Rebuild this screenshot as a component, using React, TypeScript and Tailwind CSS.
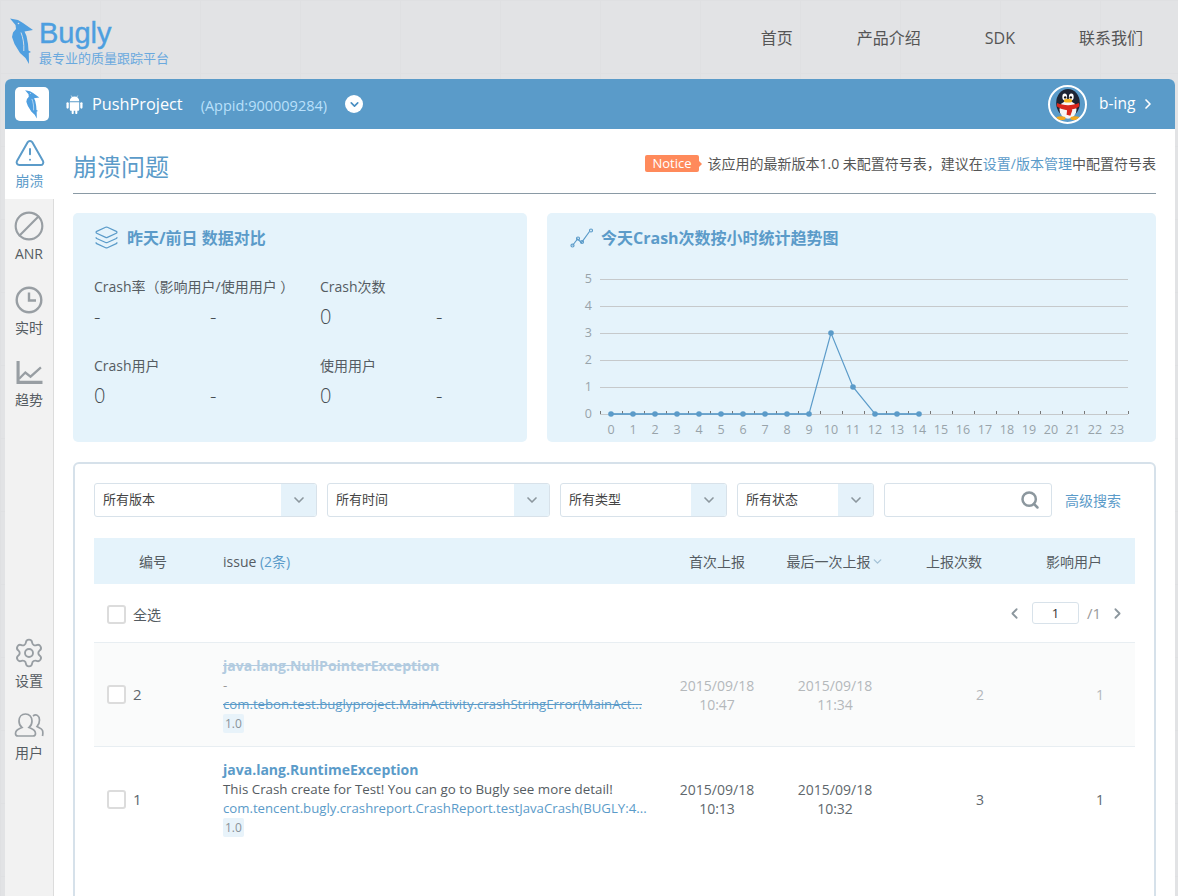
import { ChevronDown, ChevronLeft, ChevronRight, Search, Layers, Settings, AlertTriangle, Ban } from "lucide-react";

const font = "font-['Open_Sans','Noto_Sans_CJK_SC',sans-serif]";

function Bird({ className, cut }: { className?: string; cut: string }) {
  return (
    <svg viewBox="10 19 24 47" className={className}>
      <path fill="#4f9fe0" d="M10 19.500L18 21 23 24 33 31 24.500 32.500 26.500 37 28 45 28.500 51.500 31 53 28.800 54 29 65 25.500 59 20 54 14.500 45 12 38 13 33.500 16 30 15.500 26z" />
      <path fill="none" stroke={cut} strokeWidth="0.900" d="M21 33.500c2 5 3.200 11 2.800 18.500" />
      <circle cx="18.500" cy="24.500" r="0.800" fill={cut} />
    </svg>
  );
}

function Penguin() {
  return (
    <svg viewBox="0 0 36 36" className="w-[34px] h-[34px]">
      <ellipse cx="18" cy="17" rx="12.500" ry="15" fill="#1d2433" />
      <ellipse cx="18" cy="24" rx="9" ry="9.500" fill="#f7f7f7" />
      <ellipse cx="14.500" cy="10.500" rx="2.500" ry="3.500" fill="#fff" />
      <ellipse cx="21.500" cy="10.500" rx="2.500" ry="3.500" fill="#fff" />
      <circle cx="15" cy="11" r="1.300" fill="#111" />
      <circle cx="21" cy="11" r="1.300" fill="#111" />
      <ellipse cx="18" cy="14.500" rx="4.500" ry="2" fill="#f5b21c" />
      <path fill="#d9261c" d="M6.500 17c7 3 16 3 23 0l.5 3.500c-2.500 2-5 3-8 3.200l.5 1.300-2 5.500-4-1 .500-5C12 24 8.500 22.500 6 20.500z" />
      <ellipse cx="10.500" cy="33" rx="5" ry="2" fill="#f5a81c" />
      <ellipse cx="25.500" cy="33" rx="5" ry="2" fill="#f5a81c" />
    </svg>
  );
}

function Android() {
  return (
    <svg viewBox="0 0 18 20" className="w-[17px] h-[19px]" fill="#fff">
      <path d="M4 6.500a5 5 0 0 1 10 0z" />
      <path d="M4 7.500h10v8a1 1 0 0 1-1 1h-1v2.500a1.100 1.100 0 0 1-2.200 0v-2.500H8.200v2.500a1.100 1.100 0 0 1-2.200 0v-2.500H5a1 1 0 0 1-1-1z" />
      <rect x="0.500" y="7.500" width="2.400" height="7" rx="1.200" />
      <rect x="15.100" y="7.500" width="2.400" height="7" rx="1.200" />
      <path d="M5.500 0.500l1.500 2.500M12.500 0.500l-1.500 2.500" stroke="#fff" strokeWidth="0.700" />
    </svg>
  );
}

function Trend() {
  return (
    <svg viewBox="0 0 26 24" className="w-[27px] h-[25px]" fill="none" stroke="#989ea3">
      <path d="M2 1v20.500h23.500" strokeWidth="3" />
      <path d="M3 18l6-6 5 4 10-9" strokeWidth="2.200" />
    </svg>
  );
}

function ClockIcon() {
  return (
    <svg viewBox="0 0 28 28" className="w-[28px] h-[28px]" fill="none" stroke="#989ea3" strokeWidth="2.400">
      <circle cx="14" cy="14" r="12.300" />
      <path d="M14 6.500V14.500H21" />
    </svg>
  );
}

function UsersIcon() {
  return (
    <svg viewBox="0 0 30 26" className="w-[30px] h-[26px]" fill="none" stroke="#989ea3" strokeWidth="1.700">
      <path d="M19 4c3-2.500 6.500-.5 6.500 4 0 3-1 5-2.500 6.500 2 1.500 4.500 1.500 5.500 4 .5 1.500.5 3 0 5.500" />
      <path d="M11.500 2c-4 0-6.500 3-6.500 7 0 2.500 1 5 3 6.500-3 1.500-6.500 2-6.500 6 0 1.500 1 2.500 2.500 2.500h15c1.500 0 2.500-1 2.500-2.500 0-4-3.500-4.500-6.500-6 2-1.500 3-4 3-6.500 0-4-2.500-7-6.500-7z" />
    </svg>
  );
}

function SideItem({ label, children, h, active }: { label: string; children: React.ReactNode; h: string; active?: boolean }) {
  return (
    <div className={`flex flex-col items-center ${h} ${active ? "bg-white w-[49px] text-[#5b9bc9]" : "text-[#555c62]"}`}>
      <div className="h-[30px] flex items-center justify-center">{children}</div>
      <span className="text-[14px] leading-[20px] mt-[3px]">{label}</span>
    </div>
  );
}

function Stat({ label, a, b }: { label: string; a: string; b: string }) {
  return (
    <div className="w-[226px] shrink-0">
      <div className="text-[14px] leading-[20px] text-[#555c62] whitespace-nowrap">{label}</div>
      <div className="flex text-[20px] leading-[28px] font-light text-[#454c52] mt-[6px]">
        <span className="w-[116px]">{a}</span>
        <span>{b}</span>
      </div>
    </div>
  );
}

function Chart() {
  const ys = [144, 117, 90, 63, 36, 9];
  const hours = Array.from({ length: 24 }, (_, i) => i);
  const data = [0, 0, 0, 0, 0, 0, 0, 0, 0, 0, 3, 1, 0, 0, 0];
  const points = data.map((v, i) => [64 + i * 22, 144 - v * 27]);
  return (
    <svg width="609" height="172" className="block" fontSize="12.500" fill="#98a3aa">
      {ys.map((y, i) => (
        <g key={y}>
          <line x1="53" x2="581" y1={y + 0.5} y2={y + 0.5} stroke="#c6c9cb" />
          <text x="45" y={y + 4} textAnchor="end">{i}</text>
        </g>
      ))}
      {Array.from({ length: 25 }, (_, i) => (
        <line key={i} x1={53.5 + i * 22} x2={53.5 + i * 22} y1="141" y2="144" stroke="#777" />
      ))}
      {hours.map((h) => (
        <text key={h} x={64 + h * 22} y="164" textAnchor="middle">{h}</text>
      ))}
      <polyline points={points.map((p) => p.join(",")).join(" ")} fill="none" stroke="#5b9bc9" strokeWidth="1.200" />
      <line x1="64" x2="262" y1="144" y2="144" stroke="#5b9bc9" strokeWidth="2" opacity="0.7" />
      <line x1="328" x2="372" y1="144" y2="144" stroke="#5b9bc9" strokeWidth="2" opacity="0.7" />
      {points.map((p) => (
        <circle key={p[0]} cx={p[0]} cy={p[1]} r="2.800" fill="#5b9bc9" />
      ))}
    </svg>
  );
}

function Select({ label, w }: { label: string; w: string }) {
  return (
    <div className={`${w} h-[34px] border border-[#d8e2ea] rounded-[3px] flex items-center overflow-hidden bg-white`}>
      <span className="flex-1 pl-2 text-[13px] text-[#444]">{label}</span>
      <span className="w-[35px] h-full bg-[#e5f2fa] flex items-center justify-center">
        <ChevronDown size={16} strokeWidth={2.500} className="text-[#8c979e]" />
      </span>
    </div>
  );
}

function Checkbox() {
  return <span className="w-[19px] h-[19px] border-2 border-[#dcdcdc] rounded-[3px] bg-white shrink-0" />;
}

function Row(props: {
  id: string;
  name: string;
  msg: string;
  stack: string;
  first: string;
  firstTime: string;
  last: string;
  lastTime: string;
  count: string;
  users: string;
  dim?: boolean;
}) {
  const { dim } = props;
  const cell = dim ? "text-[#b4b8bb]" : "text-[#60676d]";
  return (
    <div className={`flex items-center h-[104px] ${dim ? "bg-[#fafbfb] border-b border-[#e8eef2]" : "bg-white"}`}>
      <div className="w-[129px] pl-[13px] flex items-center gap-[7px] text-[15px] text-[#60676d]">
        <Checkbox />
        {props.id}
      </div>
      <div className="w-[435px] min-w-0 -mt-[1px]">
        <div className={`text-[14px] leading-[20px] font-bold whitespace-nowrap ${dim ? "text-[#b2cbe0] line-through" : "text-[#5b9bc9]"}`}>{props.name}</div>
        <div className={`text-[13.350px] leading-[19px] whitespace-nowrap ${dim ? "text-[#999]" : "text-[#555c62]"}`}>{props.msg}</div>
        <div className={`text-[13.200px] leading-[19px] whitespace-nowrap text-[#5b9bc9] ${dim ? "line-through" : ""}`}>{props.stack}</div>
        <div className="w-fit px-[2px] h-[19px] leading-[19px] text-[12px] rounded-[2px] bg-[#e8f3fa] text-[#8a9299]">1.0</div>
      </div>
      <div className={`w-[118px] text-center text-[14px] leading-[19px] ${cell}`}>
        {props.first}
        <br />
        {props.firstTime}
      </div>
      <div className={`w-[118px] text-center text-[14px] leading-[19px] ${cell}`}>
        {props.last}
        <br />
        {props.lastTime}
      </div>
      <div className={`w-[142px] text-center text-[14px] pl-[30px] ${cell}`}>{props.count}</div>
      <div className={`w-[99px] text-center text-[14px] pl-[29px] ${cell}`}>{props.users}</div>
    </div>
  );
}

export default function App() {
  return (
    <div className={`${font} h-[896px] overflow-hidden bg-[#e2e3e5] bg-[linear-gradient(#dfe0e2_1px,transparent_1px),linear-gradient(90deg,#dfe0e2_1px,transparent_1px)] bg-[size:100px_73px]`}>
      <header className="h-[79px] flex items-center justify-between pl-[10px] pr-[35px]">
        <div className="flex items-start mt-[3px]">
          <Bird className="w-[24px] h-[47px] mt-[2px]" cut="#e2e3e5" />
          <div className="ml-[5px]">
            <div className="text-[29px] leading-[30px] text-[#4d9fe0] [-webkit-text-stroke:0.4px_#4d9fe0] font-['Liberation_Sans',sans-serif] mt-[2px]">Bugly</div>
            <div className="text-[13px] leading-[18px] text-[#6aa9de] mt-[1px]">最专业的质量跟踪平台</div>
          </div>
        </div>
        <nav className="flex gap-[64px] text-[16px] text-[#555] -mt-[4px]">
          <span>首页</span>
          <span>产品介绍</span>
          <span>SDK</span>
          <span>联系我们</span>
        </nav>
      </header>

      <div className="ml-[5px] w-[1170px] h-[817px] rounded-t-[6px] overflow-hidden bg-white">
        <div className="h-[50px] bg-[#5a9bc9] flex items-center pl-[10px] pr-[19px] text-white">
          <span className="w-[34px] h-[34px] rounded-[5px] bg-white flex items-center justify-center">
            <Bird className="w-[15px] h-[29px]" cut="#fff" />
          </span>
          <span className="ml-[17px]"><Android /></span>
          <span className="ml-[9px] text-[16.300px]">PushProject</span>
          <span className="ml-[18px] mt-[3px] text-[14.500px] text-[#b9e0fb]">(Appid:900009284)</span>
          <span className="ml-[18px] w-[18px] h-[18px] rounded-full bg-white flex items-center justify-center">
            <ChevronDown size={13} strokeWidth={3} className="text-[#4a8fc2]" />
          </span>
          <span className="ml-auto w-[39px] h-[39px] rounded-full border-2 border-white bg-[#5a9bc9] flex items-center justify-center overflow-hidden">
            <Penguin />
          </span>
          <span className="ml-[12px] w-[37px] text-[15.500px]">b-ing</span>
          <ChevronRight size={16} strokeWidth={2.500} className="ml-[4px]" />
        </div>

        <div className="flex h-[767px]">
          <aside className="w-[49px] shrink-0 bg-[#f2f2f2] border-r border-[#dcdcdc] flex flex-col">
            <SideItem label="崩溃" h="h-[70px] pt-[9px]" active>
              <AlertTriangle size={32} strokeWidth={1.500} className="text-[#5b9bc9]" />
            </SideItem>
            <SideItem label="ANR" h="h-[72px] pt-[12px]">
              <Ban size={32} strokeWidth={1.600} className="text-[#989ea3] -scale-x-100" />
            </SideItem>
            <SideItem label="实时" h="h-[72px] pt-[14px]">
              <ClockIcon />
            </SideItem>
            <SideItem label="趋势" h="h-[70px] pt-[14px]">
              <Trend />
            </SideItem>
            <div className="mt-[225px]">
              <SideItem label="设置" h="h-[72px]">
                <Settings size={32} strokeWidth={1.400} className="text-[#989ea3]" />
              </SideItem>
              <SideItem label="用户" h="h-[70px]">
                <UsersIcon />
              </SideItem>
            </div>
          </aside>

          <main className="flex-1 pl-[19px] pr-[19px] min-w-0">
            <div className="h-[65px] border-b border-[#8a9aa5] flex items-center justify-between">
              <h1 className="text-[24px] text-[#5b9bc9] mt-[12px]">崩溃问题</h1>
              <div className="flex items-center text-[14px] text-[#555] mt-[4px]">
                <span className="relative h-[17px] leading-[17px] text-[13px] px-[7px] bg-[#ff8a5b] text-white rounded-[2px] mr-[9px]">
                  Notice
                  <span className="absolute -right-[3px] top-[5px] border-l-[4px] border-y-[4px] border-y-transparent border-l-[#ff8a5b]" />
                </span>
                该应用的最新版本1.0 未配置符号表，建议在<span className="text-[#5b9bc9]">设置/版本管理</span>中配置符号表
              </div>
            </div>

            <div className="flex gap-[20px] mt-[19px]">
              <section className="w-[454px] h-[229px] bg-[#e5f3fb] rounded-[5px] pl-[21px] pt-[12px]">
                <div className="flex items-center h-[25px] text-[16px] font-bold text-[#5b9bc9]">
                  <Layers size={25} strokeWidth={1.200} />
                  <span className="ml-[8px]">昨天/前日 数据对比</span>
                </div>
                <div className="flex mt-[27px]">
                  <Stat label="Crash率（影响用户/使用用户 ）" a="-" b="-" />
                  <Stat label="Crash次数" a="0" b="-" />
                </div>
                <div className="flex mt-[25px]">
                  <Stat label="Crash用户" a="0" b="-" />
                  <Stat label="使用用户" a="0" b="-" />
                </div>
              </section>
              <section className="w-[609px] h-[229px] bg-[#e5f3fb] rounded-[5px] pt-[12px]">
                <div className="flex items-center h-[25px] pl-[23px] text-[16px] font-bold text-[#5b9bc9]">
                  <svg viewBox="0 0 24 20" className="w-[24px] h-[20px]" fill="none" stroke="#5b9bc9" strokeWidth="1.200">
                    <path d="M2.500 17.500l5-6.500 4 3.500 8-11" />
                    <circle cx="2.500" cy="17.500" r="1.500" />
                    <circle cx="8" cy="10.500" r="1.500" />
                    <circle cx="12" cy="14" r="1.500" />
                    <circle cx="21" cy="2.500" r="1.500" />
                  </svg>
                  <span className="ml-[7px]">今天Crash次数按小时统计趋势图</span>
                </div>
                <div className="mt-[20px]">
                  <Chart />
                </div>
              </section>
            </div>

            <section className="mt-[20px] h-[500px] border-2 border-[#d6e1ea] rounded-[6px] px-[19px] pt-[19px]">
              <div className="flex items-center gap-[10px]">
                <Select label="所有版本" w="w-[223px]" />
                <Select label="所有时间" w="w-[223px]" />
                <Select label="所有类型" w="w-[167px]" />
                <Select label="所有状态" w="w-[137px]" />
                <div className="w-[168px] h-[34px] border border-[#d8e2ea] rounded-[3px] flex items-center justify-end pr-[11px]">
                  <Search size={20} strokeWidth={3} className="text-[#8c979e]" />
                </div>
                <span className="ml-[3px] text-[14px] text-[#5b9bc9] whitespace-nowrap">高级搜索</span>
              </div>

              <div className="mt-[21px] h-[46px] bg-[#e5f3fb] flex items-center text-[14px] text-[#555c62]">
                <span className="w-[129px] text-center pr-[11px]">编号</span>
                <span className="w-[435px]">
                  issue <span className="text-[#5b9bc9]">(2条)</span>
                </span>
                <span className="w-[118px] text-center">首次上报</span>
                <span className="w-[118px] whitespace-nowrap flex items-center justify-center">
                  最后一次上报
                  <ChevronDown size={13} strokeWidth={2.500} className="text-[#a4c2d6]" />
                </span>
                <span className="w-[142px] text-center pr-[22px]">上报次数</span>
                <span className="w-[99px] text-center pr-[23px]">影响用户</span>
              </div>

              <div className="h-[59px] flex items-center border-b border-[#e8eef2] pl-[13px] pr-[9px] text-[14px] text-[#555c62]">
                <span className="flex items-center mt-[2px]">
                  <Checkbox />
                  <span className="ml-[7px]">全选</span>
                </span>
                <ChevronLeft size={17} strokeWidth={2.500} className="ml-auto text-[#8c979e]" />
                <span className="ml-[9px] w-[47px] h-[22px] border border-[#d8e2ea] rounded-[3px] text-center leading-[20px] text-[13px] text-[#333]">1</span>
                <span className="ml-[8px] text-[15px] text-[#999]">/1</span>
                <ChevronRight size={17} strokeWidth={2.500} className="ml-[8px] text-[#8c979e]" />
              </div>

              <Row
                dim
                id="2"
                name="java.lang.NullPointerException"
                msg="-"
                stack="com.tebon.test.buglyproject.MainActivity.crashStringError(MainAct..."
                first="2015/09/18"
                firstTime="10:47"
                last="2015/09/18"
                lastTime="11:34"
                count="2"
                users="1"
              />
              <Row
                id="1"
                name="java.lang.RuntimeException"
                msg="This Crash create for Test! You can go to Bugly see more detail!"
                stack="com.tencent.bugly.crashreport.CrashReport.testJavaCrash(BUGLY:4..."
                first="2015/09/18"
                firstTime="10:13"
                last="2015/09/18"
                lastTime="10:32"
                count="3"
                users="1"
              />
            </section>
          </main>
        </div>
      </div>
    </div>
  );
}
